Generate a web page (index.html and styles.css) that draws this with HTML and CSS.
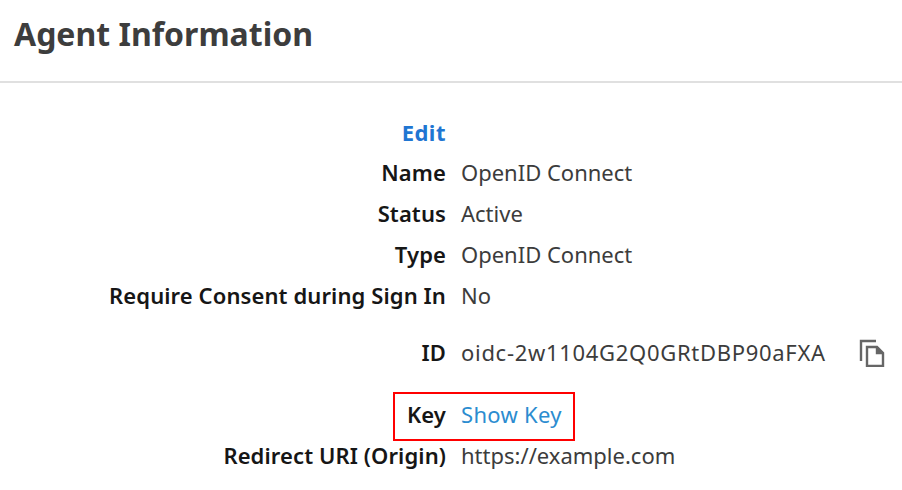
FILE: index.html
```html
<!DOCTYPE html>
<html lang="en">

<head>
  <meta charset="UTF-8">
  <title>Agent Information</title>
  <link rel="stylesheet" href="styles.css">
</head>

<body>
  <div class="header">
    <h1>Agent Information</h1>
  </div>
  <div class="info">
    <div class="row row-edit">
      <span class="label"><a class="edit" href="#">Edit</a></span>
    </div>
    <div class="row">
      <span class="label">Name</span>
      <span class="value">OpenID Connect</span>
    </div>
    <div class="row">
      <span class="label">Status</span>
      <span class="value">Active</span>
    </div>
    <div class="row">
      <span class="label">Type</span>
      <span class="value">OpenID Connect</span>
    </div>
    <div class="row">
      <span class="label">Require Consent during Sign In</span>
      <span class="value">No</span>
    </div>
    <div class="row row-id">
      <span class="label">ID</span>
      <span class="value id-value">oidc-2w1104G2Q0GRtDBP90aFXA</span>
      <svg class="copy" viewBox="0 0 26 28" width="26" height="28" fill="none" stroke="#666" stroke-width="2.4">
        <path d="M17 2H2v20"/>
        <path d="M8 8h10l6 6v13H8z"/>
        <path d="M18 8v6h6" fill="#666"/>
      </svg>
    </div>
    <div class="row row-key">
      <span class="label">Key</span>
      <span class="value"><a class="show" href="#">Show Key</a></span>
      <div class="highlight"></div>
    </div>
    <div class="row">
      <span class="label">Redirect URI (Origin)</span>
      <span class="value">https://example.com</span>
    </div>
  </div>
</body>

</html>
```

FILE: styles.css
```css
* {
  margin: 0;
  padding: 0;
  box-sizing: border-box;
}

body {
  width: 902px;
  height: 490px;
  overflow: hidden;
  background: #fff;
  font-family: "Noto Sans", "Liberation Sans", sans-serif;
  font-size: 22px;
  color: #3c3c3c;
}

.header {
  height: 83px;
  padding: 12px 14px 0;
  border-bottom: 2px solid #e0e0e0;
}

.header h1 {
  font-size: 32px;
  line-height: 44px;
  font-weight: 700;
  color: #3d3d3d;
}

.info {
  padding-top: 29px;
}

.row {
  position: relative;
  display: flex;
  align-items: center;
  height: 41px;
  line-height: 41px;
}

.row-edit {
  height: 40px;
}

.label {
  width: 446px;
  text-align: right;
  font-weight: 600;
  letter-spacing: 0.1px;
  color: #161616;
}

.value {
  margin-left: 15px;
}

.id-value {
  letter-spacing: 0.7px;
}

.edit {
  color: #1f76d2;
  font-weight: 700;
  letter-spacing: 0.5px;
  text-decoration: none;
}

.show {
  color: #2b8cd0;
  letter-spacing: 0.3px;
  text-decoration: none;
}

.row-id {
  margin-top: 16px;
}

.row-key {
  margin-top: 21px;
}

.copy {
  margin-left: 33px;
}

.highlight {
  position: absolute;
  left: 393px;
  top: -2px;
  width: 182px;
  height: 49px;
  border: 2px solid #f00;
}
```
